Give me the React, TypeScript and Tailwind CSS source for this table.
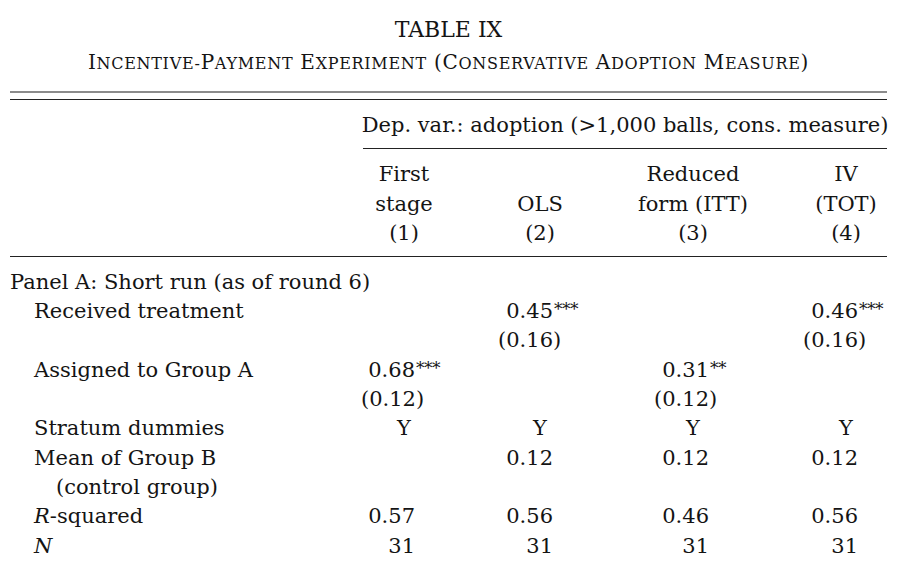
import React from "react";

type Cell = { pre?: string; num?: string; post?: string; stars?: string; y?: boolean };

const cols = [
  { cell: "ml-0", sfx: "w-[32px]" },
  { cell: "ml-[50px]", sfx: "w-[30px]" },
  { cell: "ml-[67px]", sfx: "w-[27px]" },
  { cell: "ml-[67px]", sfx: "w-[31px]" },
];

const headers = [
  ["First", "stage", "(1)"],
  ["", "OLS", "(2)"],
  ["Reduced", "form (ITT)", "(3)"],
  ["IV", "(TOT)", "(4)"],
];

// subtitle words in small caps: [big part, small part]
const subtitle: [string, string][] = [
  ["I", "NCENTIVE-"],
  ["P", "AYMENT"],
  [" E", "XPERIMENT"],
  [" (C", "ONSERVATIVE"],
  [" A", "DOPTION"],
  [" M", "EASURE"],
  [")", ""],
];

const rows: { label: React.ReactNode; indent: string; cells: (Cell | null)[] }[] = [
  { label: "Panel A: Short run (as of round 6)", indent: "pl-0", cells: [null, null, null, null] },
  {
    label: "Received treatment",
    indent: "pl-[24px]",
    cells: [null, { num: "0.45", stars: "***" }, null, { num: "0.46", stars: "***" }],
  },
  {
    label: "",
    indent: "pl-[24px]",
    cells: [null, { pre: "(", num: "0.16", post: ")" }, null, { pre: "(", num: "0.16", post: ")" }],
  },
  {
    label: "Assigned to Group A",
    indent: "pl-[24px]",
    cells: [{ num: "0.68", stars: "***" }, null, { num: "0.31", stars: "**" }, null],
  },
  {
    label: "",
    indent: "pl-[24px]",
    cells: [{ pre: "(", num: "0.12", post: ")" }, null, { pre: "(", num: "0.12", post: ")" }, null],
  },
  {
    label: "Stratum dummies",
    indent: "pl-[24px]",
    cells: [{ y: true }, { y: true }, { y: true }, { y: true }],
  },
  {
    label: "Mean of Group B",
    indent: "pl-[24px]",
    cells: [null, { num: "0.12" }, { num: "0.12" }, { num: "0.12" }],
  },
  { label: "(control group)", indent: "pl-[46px]", cells: [null, null, null, null] },
  {
    label: (
      <>
        <span className="italic">R</span>-squared
      </>
    ),
    indent: "pl-[24px]",
    cells: [{ num: "0.57" }, { num: "0.56" }, { num: "0.46" }, { num: "0.56" }],
  },
  {
    label: <span className="italic">N</span>,
    indent: "pl-[24px]",
    cells: [{ num: "31" }, { num: "31" }, { num: "31" }, { num: "31" }],
  },
];

function Value({ c, sfx }: { c: Cell | null; sfx: string }) {
  if (!c) return null;
  if (c.y) return <div className="flex justify-center">Y</div>;
  return (
    <div className="flex justify-end whitespace-nowrap">
      <span>
        {c.pre}
        {c.num}
      </span>
      <span className={`${sfx} text-left`}>
        {c.post}
        {c.stars && <span className="relative -top-[3px] pl-[1px] text-[17px] tracking-[-0.5px]">{c.stars}</span>}
      </span>
    </div>
  );
}

export default function App() {
  return (
    <div className="w-[913px] h-[570px] bg-white text-[#141414] font-['DejaVu_Serif',serif] text-[21px] overflow-hidden">
      <div className="mx-[10px] w-[877px]">
        {/* title */}
        <div className="h-[44px] pt-[15px] text-center text-[22px] leading-[29px]">TABLE IX</div>
        <div className="mt-[4px] flex h-[29px] items-center justify-center whitespace-pre leading-[29px] tracking-[0.7px]">
          {subtitle.map(([big, small], i) => (
            <span key={i}>
              <span className="text-[20px]">{big}</span>
              <span className="text-[16px]">{small}</span>
            </span>
          ))}
        </div>

        <div className="mt-[14px] h-[2px] bg-[#8c8c8c]" />
        <div className="mt-[6px] h-[1px] bg-[#222]" />

        {/* column group header */}
        <div className="ml-[353px] mt-[11px] w-[524px]">
          <div className="flex justify-center whitespace-nowrap leading-[29.3px]">
            Dep. var.: adoption (&gt;1,000 balls, cons. measure)
          </div>
          <div className="mt-[8px] h-[1px] bg-[#222]" />
        </div>

        <div className="mt-[11px] flex leading-[29.5px]">
          <div className="w-[351px] shrink-0" />
          {headers.map((h, i) => (
            <div key={i} className={`${cols[i].cell} w-[86px] shrink-0 flex flex-col items-center whitespace-nowrap`}>
              {h.map((line, j) => (
                <div key={j} className="h-[29.5px]">
                  {line}
                </div>
              ))}
            </div>
          ))}
        </div>
        <div className="mt-[7px] h-[1px] bg-[#222]" />

        {/* body */}
        <div className="mt-[11px] leading-[29.33px]">
          {rows.map((r, ri) => (
            <div key={ri} className="flex h-[29.33px]">
              <div className={`w-[351px] shrink-0 whitespace-nowrap ${r.indent}`}>{r.label}</div>
              {r.cells.map((c, i) => (
                <div key={i} className={`${cols[i].cell} w-[86px] shrink-0`}>
                  <Value c={c} sfx={cols[i].sfx} />
                </div>
              ))}
            </div>
          ))}
        </div>
      </div>
    </div>
  );
}
